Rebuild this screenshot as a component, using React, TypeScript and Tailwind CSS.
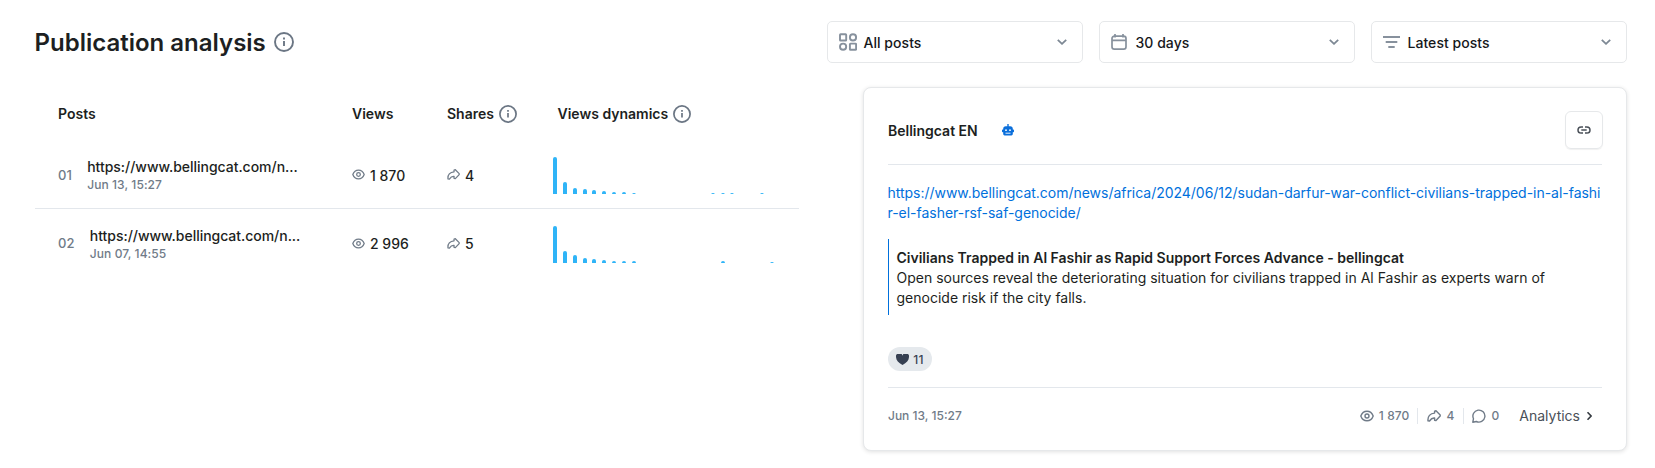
import type { ReactNode } from "react";

type IconProps = { className?: string };

function InfoIcon({ className }: IconProps) {
  return (
    <svg viewBox="0 0 20 20" fill="none" className={className}>
      <circle cx="10" cy="10" r="9" stroke="currentColor" strokeWidth="1.9" />
      <path d="M10 9v5" stroke="currentColor" strokeWidth="1.9" />
      <path d="M10 5.6v1.8" stroke="currentColor" strokeWidth="1.9" />
    </svg>
  );
}

function EyeIcon({ className }: IconProps) {
  return (
    <svg viewBox="0 0 14 12" fill="none" stroke="currentColor" strokeWidth="1.4" className={className}>
      <path d="M.8 6C1.9 3 4.2 1.2 7 1.2S12.100 3 13.200 6C12.100 9 9.800 10.800 7 10.800S1.900 9 .8 6Z" strokeLinejoin="round" />
      <circle cx="7" cy="6" r="2" />
    </svg>
  );
}

function ShareIcon({ className }: IconProps) {
  return (
    <svg viewBox="0 0 14 12" fill="none" stroke="currentColor" strokeWidth="1.4" strokeLinejoin="round" className={className}>
      <path d="M7.600 1.100 9 .8 13.200 5V6.100L9 10.500 7.600 10.200V8C5.400 7.700 4 8.700 2.500 11L1 10.800C.5 6.400 3.200 3.300 7.600 3.100Z" />
    </svg>
  );
}

function CommentIcon({ className }: IconProps) {
  return (
    <svg viewBox="0 0 14 14" fill="none" stroke="currentColor" strokeWidth="1.4" strokeLinejoin="round" className={className}>
      <path d="M.8 13.200 1.500 9.700A6 6 0 1 1 4.300 12.500Z" />
    </svg>
  );
}

function Chevron({ className }: IconProps) {
  return (
    <svg viewBox="0 0 10 6" fill="none" stroke="currentColor" strokeWidth="1.8" className={className}>
      <path d="M.8.8 5 4.800 9.200.8" />
    </svg>
  );
}

function GridIcon() {
  return (
    <svg viewBox="0 0 18 18" fill="none" stroke="currentColor" strokeWidth="1.9" className="size-[18px]">
      <rect x="1" y="1.300" width="6.200" height="6.200" rx=".6" />
      <circle cx="14" cy="4.400" r="3.100" />
      <circle cx="4.100" cy="13.700" r="3.100" />
      <rect x="10.900" y="10.600" width="6.200" height="6.200" rx=".6" />
    </svg>
  );
}

function CalendarIcon() {
  return (
    <svg viewBox="0 0 16 16" fill="none" stroke="currentColor" strokeWidth="1.7" className="size-4">
      <rect x="1" y="2.200" width="14" height="12.900" rx="2.400" />
      <path d="M1 6.400h14M4 0v3.400M12 0v3.400" />
    </svg>
  );
}

function SortIcon() {
  return (
    <svg viewBox="0 0 17 12" fill="none" stroke="currentColor" strokeWidth="2" className="h-3 w-[17px]">
      <path d="M0 1h17M2.700 6h11.600M5.300 11h6.400" />
    </svg>
  );
}

function Select({ icon, label }: { icon: ReactNode; label: string }) {
  return (
    <button className="flex h-[42px] w-64 items-center rounded-[5px] border border-[#e6e8ea] bg-white pl-[11px] pr-[15.5px] text-[14px] font-medium text-[#16181b]">
      <span className="flex w-[24.5px] text-[#87919d]">{icon}</span>
      <span className="pt-px tracking-[0.04px]">{label}</span>
      <Chevron className="ml-auto h-[6px] w-[10px] text-[#7d8894]" />
    </button>
  );
}

const STEP = 9.86;

function Bars({ data }: { data: Record<number, number> }) {
  return (
    <svg width="236" height="37" viewBox="0 0 236 37" className="overflow-hidden">
      {Object.entries(data).map(([i, h]) => (
        <rect key={i} x={Math.round(Number(i) * STEP)} y={37 - h} width="4" height={h + 4} rx="2" fill="#2fb4f7" />
      ))}
    </svg>
  );
}

const rows = [
  {
    n: "01",
    date: "Jun 13, 15:27",
    views: "1 870",
    shares: "4",
    bars: { 0: 37, 1: 12, 2: 6, 3: 5, 4: 4, 5: 3, 6: 2, 7: 2, 8: 1, 16: 1, 17: 1, 18: 1, 21: 1 },
  },
  {
    n: "02",
    date: "Jun 07, 14:55",
    views: "2 996",
    shares: "5",
    bars: { 0: 37, 1: 12, 2: 8, 3: 5, 4: 4, 5: 3, 6: 2, 7: 2, 8: 2, 17: 2, 22: 1 },
  },
];

function PostsTable() {
  return (
    <section className="w-[764px] text-[14px] text-[#1d1f22]">
      <div className="flex h-[53px] items-center pl-[23px] font-semibold">
        <span className="w-[294px]">Posts</span>
        <span className="w-[95px]">Views</span>
        <span className="flex w-[110.500px] items-center gap-[5px]">
          Shares <InfoIcon className="size-[18px] text-[#6b7684]" />
        </span>
        <span className="flex items-center gap-[5px]">
          Views dynamics <InfoIcon className="size-[18px] text-[#6b7684]" />
        </span>
      </div>
      {rows.map((r, i) => (
        <div
          key={r.n}
          className={`flex items-center pl-[23px] font-medium ${i < rows.length - 1 ? "h-[69px] border-b border-[#e3e7ec] pt-[3px]" : "h-[68px] pt-[2px]"}`}
        >
          <div className="flex w-[294px] items-center">
            <span className="mr-[15px] text-[13px] tracking-[0.2px] text-[#707b88]">{r.n}</span>
            <div className="flex flex-col">
              <span className="leading-[18px] tracking-[-0.03px]">https://www.bellingcat.com/n...</span>
              <span className="text-[12px] leading-[17px] tracking-[0.08px] text-[#707b88]">{r.date}</span>
            </div>
          </div>
          <div className="flex w-[95px] items-center gap-[5px] pb-px">
            <EyeIcon className="mb-px h-[11px] w-[13px] text-[#707b88]" />
            {r.views}
          </div>
          <div className="flex w-[106px] items-center gap-[5px] pb-px">
            <ShareIcon className="mb-px h-[11px] w-[13px] text-[#707b88]" />
            {r.shares}
          </div>
          <Bars data={r.bars} />
        </div>
      ))}
    </section>
  );
}

function Robot() {
  return (
    <svg viewBox="0 0 12 12" className="size-3">
      <path
        fill="#0b6fdb"
        d="M5.300 0h1.400v2.200H8.200A2.600 2.600 0 0 1 10.800 4.800V5.600H11.300A.7.7 0 0 1 12 6.300V7.600A.7.7 0 0 1 11.300 8.300H10.800V10A1.400 1.400 0 0 1 9.400 11.400H2.600A1.400 1.400 0 0 1 1.200 10V8.300H.7A.7.7 0 0 1 0 7.600V6.300A.7.7 0 0 1 .7 5.600H1.200V4.800A2.600 2.600 0 0 1 3.800 2.200H5.300Z"
      />
      <circle cx="4" cy="6.200" r=".9" fill="#fff" />
      <circle cx="8" cy="6.200" r=".9" fill="#fff" />
      <path d="M3.500 9.200h5" stroke="#fff" strokeWidth=".9" />
    </svg>
  );
}

function PostCard() {
  return (
    <article className="flex h-[364px] w-[764px] flex-col rounded-[8px] border border-[#e6e8ea] bg-white px-6 text-[14px] text-[#1d1f22] shadow-[0_1px_4px_rgba(0,0,0,0.12)]">
      <header className="flex h-[77px] items-center border-b border-[#e3e7ec] pt-[8px]">
        <span className="font-semibold">Bellingcat EN</span>
        <span className="ml-6"><Robot /></span>
        <button className="-mr-px ml-auto flex size-[38px] items-center justify-center rounded-[6px] border border-[#e6e8ea] shadow-[0_1px_1px_rgba(0,0,0,0.06)]">
          <svg viewBox="0 0 14 8" fill="none" stroke="#4a5058" strokeWidth="1.5" className="h-2 w-[14px]">
            <path d="M6 .9H4.100a3.100 3.100 0 0 0 0 6.200H6M8 .9h1.900a3.100 3.100 0 0 1 0 6.200H8M4.300 4h5.400" />
          </svg>
        </button>
      </header>
      <a className="-ml-[0.5px] mt-[18px] break-all leading-5 tracking-[-0.025px] text-[#0070dc]">
        https://www.bellingcat.com/news/africa/2024/06/12/sudan-darfur-war-conflict-civilians-trapped-in-al-fashir-el-fasher-rsf-saf-genocide/
      </a>
      <div className="mt-4 h-[76px] border-l border-[#0070dc] pl-[7.500px] pt-[9px] leading-5">
        <b className="block font-semibold">Civilians Trapped in Al Fashir as Rapid Support Forces Advance - bellingcat</b>
        <p>
          Open sources reveal the deteriorating situation for civilians trapped in Al Fashir as experts warn of
          genocide risk if the city falls.
        </p>
      </div>
      <div className="mt-8 flex h-6 w-11 items-center justify-center gap-1 rounded-full bg-[#e5e9ed] text-[12px] font-medium tracking-[0.3px] text-[#3a4354]">
        <svg viewBox="0 0 13 11" fill="#364052" className="h-[11px] w-[13px]">
          <path d="M6.500 11C2.500 8.500.1 6.200.1 3.400A3.200 3.200 0 0 1 6.500 1.700 3.200 3.200 0 0 1 12.900 3.400C12.900 6.200 10.500 8.500 6.500 11Z" />
        </svg>
        <span className="pt-px">11</span>
      </div>
      <footer className="mt-4 flex h-[56px] items-center border-t border-[#e3e7ec] text-[12px] font-medium text-[#707b88]">
        <span>Jun 13, 15:27</span>
        <div className="ml-auto flex items-center tracking-[0.1px]">
          <span className="flex items-center gap-[5px] border-r border-[#e3e7ec] pr-2 leading-4">
            <EyeIcon className="h-3 w-[14px]" />1 870
          </span>
          <span className="flex items-center gap-[5px] border-r border-[#e3e7ec] pl-[9px] pr-[8.500px] leading-4">
            <ShareIcon className="h-3 w-[14px]" />4
          </span>
          <span className="flex items-center gap-[5px] pl-[8.500px] leading-4">
            <CommentIcon className="size-[14px]" />0
          </span>
        </div>
        <a className="ml-5 flex items-center gap-[5px] pr-[8px] text-[14px] font-normal text-[#4a5058]">
          Analytics
          <Chevron className="h-[6px] w-[9px] -rotate-90 text-[#353a40]" />
        </a>
      </footer>
    </article>
  );
}

export default function App() {
  return (
    <main className="h-[468px] w-[1655px] overflow-hidden bg-white pl-[35px] pr-7 pt-[21px] font-['Inter',sans-serif]">
      <div className="flex h-[42px] items-center">
        <h1 className="-ml-[0.5px] pt-px text-[24px] font-semibold leading-8 text-[#1d1f22]">Publication analysis</h1>
        <InfoIcon className="ml-[8px] size-5 text-[#6b7684]" />
        <div className="ml-auto flex gap-4">
          <Select icon={<GridIcon />} label="All posts" />
          <Select icon={<CalendarIcon />} label="30 days" />
          <Select icon={<SortIcon />} label="Latest posts" />
        </div>
      </div>
      <div className="mt-6 flex items-start justify-between">
        <PostsTable />
        <PostCard />
      </div>
    </main>
  );
}
